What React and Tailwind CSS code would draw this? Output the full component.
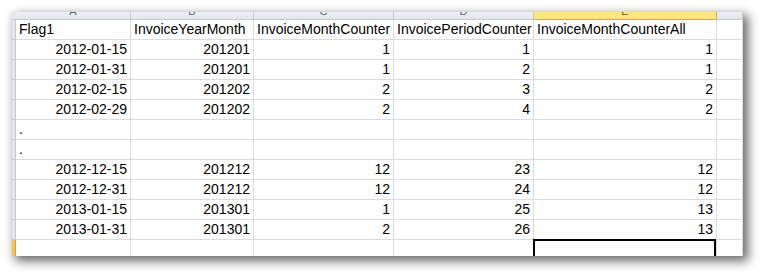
const cols = [
  { key: "A", w: "w-[115px]" },
  { key: "B", w: "w-[123px]" },
  { key: "C", w: "w-[140px]" },
  { key: "D", w: "w-[140px]" },
  { key: "E", w: "w-[183px]" },
  { key: "F", w: "w-[26px]" },
];

const rows = [
  ["Flag1", "InvoiceYearMonth", "InvoiceMonthCounter", "InvoicePeriodCounter", "InvoiceMonthCounterAll"],
  ["2012-01-15", "201201", "1", "1", "1"],
  ["2012-01-31", "201201", "1", "2", "1"],
  ["2012-02-15", "201202", "2", "3", "2"],
  ["2012-02-29", "201202", "2", "4", "2"],
  [".", "", "", "", ""],
  [".", "", "", "", ""],
  ["2012-12-15", "201212", "12", "23", "12"],
  ["2012-12-31", "201212", "12", "24", "12"],
  ["2013-01-15", "201301", "1", "25", "13"],
  ["2013-01-31", "201301", "2", "26", "13"],
];

const Cell = ({ w, right, children }) => (
  <div
    className={`${w} shrink-0 h-full border-r border-[#dadcdd] flex items-end pb-[1px] overflow-hidden whitespace-nowrap ${
      right ? "justify-end pr-[3px]" : "pl-[3px]"
    }`}
  >
    {children}
  </div>
);

const App = () => {
  return (
    <div className="w-[763px] h-[276px] bg-white pt-[12px] pl-[12px] overflow-hidden">
      <div className="w-[731px] h-[244px] bg-white flex overflow-hidden shadow-[4px_4px_10px_1px_rgba(0,0,0,0.6)] font-['Liberation_Sans',sans-serif] text-[14px] leading-[18px] text-black">
        {/* row headers */}
        <div className="w-[4px] shrink-0 flex flex-col">
          <div className="h-[8px] shrink-0 bg-[#e4e7ec] border-b border-[#c3c8ce]"></div>
          {rows.map((_, i) => (
            <div key={i} className="h-[20px] shrink-0 bg-[#e3e7ed] border-b border-r border-[#c5cad1]"></div>
          ))}
          <div className="flex-1 bg-[#f4c25a] border-r border-[#d9a23c]"></div>
        </div>

        {/* grid */}
        <div className="flex flex-col">
          <div className="h-[8px] flex shrink-0">
            {cols.map((c) => (
              <div
                key={c.key}
                className={`${c.w} shrink-0 border-r border-b text-center leading-[6px] text-[11px] overflow-hidden ${
                  c.key === "E"
                    ? "bg-[#fde77f] border-[#e3a33b] text-[#6b5a20]"
                    : "bg-gradient-to-b from-[#eef0f3] to-[#e2e5ea] border-[#c6cbd1] text-[#5a6270]"
                }`}
              >
                <span className="relative -top-[4px]">{c.key === "F" ? "" : c.key}</span>
              </div>
            ))}
          </div>

          {rows.map((r, i) => (
            <div key={i} className="h-[20px] flex shrink-0 border-b border-[#dadcdd]">
              {r.map((v, j) => {
                const right = i > 0 && v !== ".";
                return (
                  <Cell key={j} w={cols[j].w} right={right}>
                    {v}
                  </Cell>
                );
              })}
              <Cell w={cols[5].w}></Cell>
            </div>
          ))}

          <div className="flex shrink-0">
            {cols.map((c) => (
              <div key={c.key} className={`${c.w} shrink-0 h-[20px] border-r border-[#dadcdd] relative`}>
                {c.key === "E" && (
                  <div className="absolute -left-px -top-px right-0 bottom-0 border-2 border-black"></div>
                )}
              </div>
            ))}
          </div>
        </div>
      </div>
    </div>
  );
};

export default App;
